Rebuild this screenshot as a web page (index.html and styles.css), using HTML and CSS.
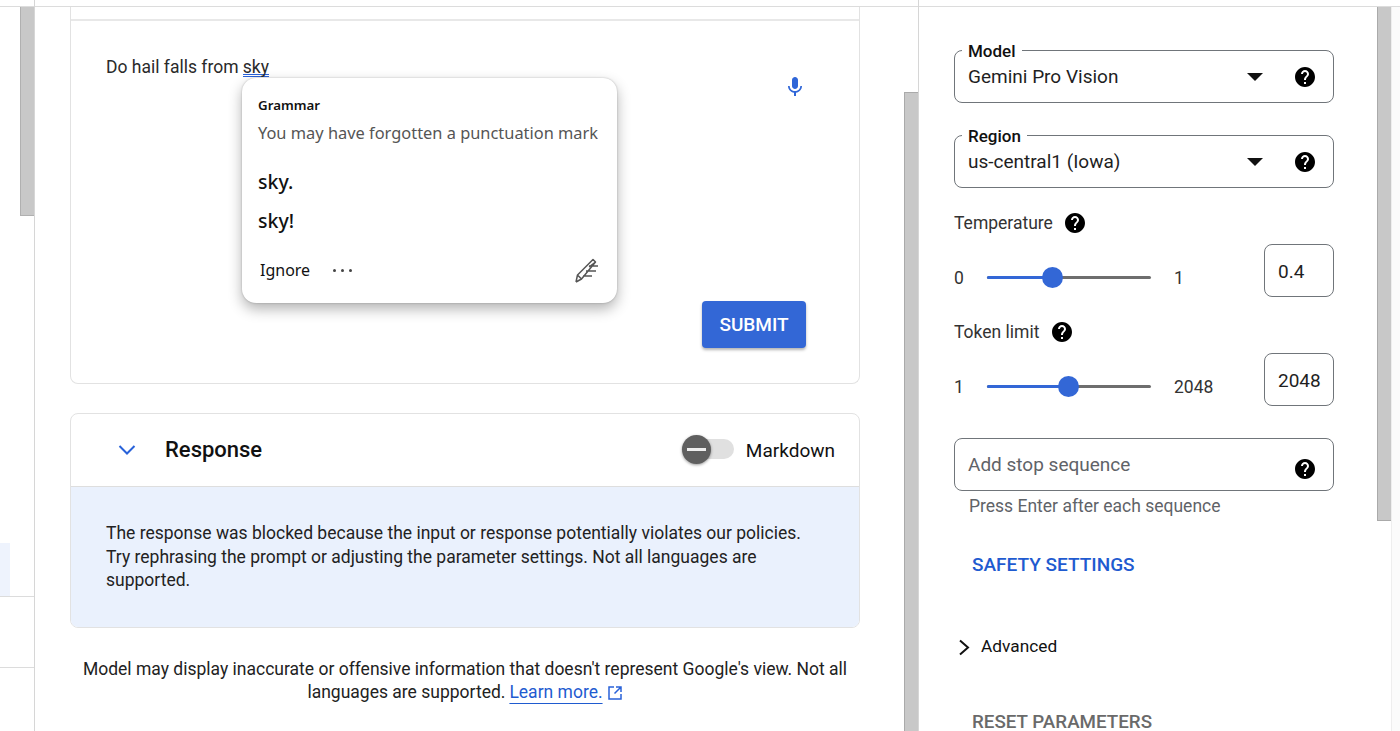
FILE: index.html
```html
<!DOCTYPE html>
<html lang="en">
<head>
<meta charset="utf-8">
<title>Gemini Pro Vision prompt</title>
<link rel="stylesheet" href="styles.css">
</head>
<body>
<svg class="defs" width="0" height="0" aria-hidden="true">
  <symbol id="help" viewBox="0 0 24 24"><path d="M12 2C6.48 2 2 6.48 2 12s4.48 10 10 10 10-4.48 10-10S17.52 2 12 2zm1 17h-2v-2h2v2zm2.07-7.75l-.9.92C13.45 12.9 13 13.5 13 15h-2v-.5c0-1.1.45-2.1 1.17-2.83l1.24-1.26c.37-.36.59-.86.59-1.41 0-1.1-.9-2-2-2s-2 .9-2 2H8c0-2.21 1.79-4 4-4s4 1.79 4 4c0 .88-.36 1.68-.93 2.25z"/></symbol>
</svg>
<div class="shell">
  <aside class="side">
    <div class="strip"></div>
    <div class="side-list">
      <div class="side-row side-row-active"><div class="side-mark"></div></div>
      <div class="side-row side-row-plain"></div>
    </div>
    <div class="side-thumb"></div>
  </aside>

  <main class="main">
    <div class="strip"></div>
    <div class="main-body">
      <div class="main-content">
        <section class="card prompt-card">
          <div class="prompt-head"></div>
          <div class="prompt-body">
            <p class="prompt-text">Do hail falls from <span class="flagged">sky</span></p>
            <svg class="mic" viewBox="0 0 24 24" width="24" height="24"><path d="M12 14c1.66 0 2.99-1.34 2.99-3L15 5c0-1.66-1.34-3-3-3S9 3.34 9 5v6c0 1.66 1.34 3 3 3zm5.3-3c0 3-2.54 5.1-5.3 5.1S6.7 14 6.7 11H5c0 3.41 2.72 6.23 6 6.72V21h2v-3.28c3.28-.48 6-3.3 6-6.72h-1.7z"/></svg>
            <button class="submit">SUBMIT</button>
          </div>
          <div class="popup">
            <div class="popup-title">Grammar</div>
            <div class="popup-msg">You may have forgotten a punctuation mark</div>
            <div class="popup-option popup-option-first">sky.</div>
            <div class="popup-option">sky!</div>
            <div class="popup-foot">
              <span class="popup-ignore">Ignore</span>
              <span class="popup-more"><i></i><i></i><i></i></span>
              <svg class="feather" viewBox="0 0 24 25" width="24" height="25"><path d="M1 24L2.500 17 18 1.500 20.500 4 14 9M14 8H23M11 13H21M8 18H17M2.500 17L6.500 21 1 24M6.500 21L20.500 4"/></svg>
            </div>
          </div>
        </section>

        <section class="card response-card">
          <header class="response-head">
            <svg class="response-chevron" viewBox="0 0 18 10" width="18" height="10"><path d="M1.500 1l7.500 7.500L16.500 1"/></svg>
            <h2 class="response-title">Response</h2>
            <div class="toggle"><span class="toggle-knob"></span></div>
            <span class="toggle-label">Markdown</span>
          </header>
          <div class="response-body">The response was blocked because the input or response potentially violates our policies. Try rephrasing the prompt or adjusting the parameter settings. Not all languages are supported.</div>
        </section>

        <div class="disclaimer">
          <div>Model may display inaccurate or offensive information that doesn't represent Google's view. Not all</div>
          <div class="disclaimer-line"><span>languages are supported.</span><a class="learn" href="#">Learn more.</a><svg class="ext" viewBox="0 0 16 16" width="16" height="16"><path d="M7 2H2v12h12V9M9 2h5v5M14 2L7.500 8.500"/></svg></div>
        </div>
      </div>
      <div class="main-track"><div class="main-thumb"></div></div>
    </div>
  </main>

  <aside class="panel">
    <div class="strip"></div>
    <div class="panel-body">
      <div class="panel-content">
        <div class="field">
          <span class="legend">Model</span>
          <span class="field-value">Gemini Pro Vision</span>
          <span class="caret"></span>
          <svg class="help"><use href="#help"/></svg>
        </div>
        <div class="field field-next">
          <span class="legend">Region</span>
          <span class="field-value">us-central1 (Iowa)</span>
          <span class="caret"></span>
          <svg class="help"><use href="#help"/></svg>
        </div>

        <div class="param-label param-first">Temperature <svg class="help help-inline"><use href="#help"/></svg></div>
        <div class="slider-row">
          <span class="min">0</span>
          <div class="track"><div class="fill" style="width:40%"><span class="knob"></span></div></div>
          <span class="max">1</span>
          <div class="num">0.4</div>
        </div>

        <div class="param-label param-second">Token limit <svg class="help help-inline"><use href="#help"/></svg></div>
        <div class="slider-row">
          <span class="min">1</span>
          <div class="track"><div class="fill" style="width:50%"><span class="knob"></span></div></div>
          <span class="max">2048</span>
          <div class="num">2048</div>
        </div>

        <div class="field field-next">
          <span class="field-value field-placeholder">Add stop sequence</span>
          <svg class="help help-low"><use href="#help"/></svg>
        </div>
        <div class="hint">Press Enter after each sequence</div>

        <div class="text-btn safety">SAFETY SETTINGS</div>
        <div class="advanced">
          <svg class="adv-chevron" viewBox="0 0 12 17" width="12" height="17"><path d="M2 1.500l8 7-8 7"/></svg>
          <span>Advanced</span>
        </div>
        <div class="text-btn reset">RESET PARAMETERS</div>
      </div>
      <div class="panel-track"><div class="panel-thumb"></div></div>
    </div>
  </aside>
</div>
</body>
</html>
```
FILE: styles.css
```css
* { box-sizing: border-box; }
html, body { margin: 0; height: 731px; overflow: hidden; background: #fff; }
body { font-family: Roboto, "Liberation Sans", sans-serif; font-size: 17.500px; color: #1f1f1f; }
.defs { position: absolute; }
.shell { display: flex; height: 731px; }
.strip { height: 7px; border-bottom: 1px solid #dcdcdc; }

/* left rail */
.side { position: relative; width: 35px; flex: none; border-right: 1px solid #d6d6d6; }
.side-list { padding-top: 536px; }
.side-row { border-bottom: 1px solid #dcdcdc; }
.side-row-active { height: 54px; }
.side-mark { width: 10px; height: 53px; background: #eef3fd; }
.side-row-plain { height: 71px; }
.side-thumb { position: absolute; left: 20px; top: 7px; width: 14px; height: 209px; background: #c8c8c8; border: 1px solid #b0b0b0; border-width: 0 0 1px 1px; }

/* centre */
.main { width: 884px; flex: none; border-right: 1px solid #d6d6d6; display: flex; flex-direction: column; }
.main-body { flex: 1; display: flex; min-height: 0; }
.main-content { width: 869px; flex: none; padding: 0 9px 0 35px; }
.main-track { width: 14px; flex: none; padding-top: 85px; }
.main-thumb { height: 650px; background: #c8c8c8; border: 1px solid #aaa; border-width: 1px 0 0 1px; }

.card { width: 790px; border: 1px solid #e2e2e2; border-radius: 0 0 8px 8px; background: #fff; }
.prompt-card { position: relative; height: 377px; border-top: 0; }
.prompt-head { height: 14px; border-bottom: 2px solid #e8e8e8; }
.prompt-body { display: flex; flex-direction: column; height: 362px; padding: 35px 52px 35px 35px; }
.prompt-text { margin: 0; font-size: 17.500px; line-height: 22px; color: #2a2a2a; }
.flagged { display: inline-block; line-height: 14px; border-bottom: 3px double #2962d9; }
.mic { align-self: flex-end; margin: -3px 0 0; fill: #2f66d8; }
.submit { align-self: flex-end; margin-top: auto; margin-right: 1px; width: 104px; height: 47px; border: 0; border-radius: 4px; background: #3367d6; color: #fff; font: 500 19px Roboto, sans-serif; box-shadow: 0 2px 3px rgba(0,0,0,.3); }

.popup { position: absolute; left: 171px; top: 71px; width: 375px; height: 225px; padding: 17px 16px 0; border-radius: 14px; background: #fff; box-shadow: 0 0 2px rgba(0,0,0,.25), 0 6px 14px rgba(0,0,0,.3); font-family: "Noto Sans", sans-serif; color: #111; }
.popup-title { font-size: 13.300px; font-weight: 600; line-height: 20px; }
.popup-msg { margin-top: 7px; font-size: 16.400px; line-height: 22px; color: #555; white-space: nowrap; }
.popup-option { font-size: 19.500px; font-weight: 500; line-height: 24px; margin-top: 15px; }
.popup-option-first { margin-top: 26px; }
.popup-foot { display: flex; align-items: center; margin-top: 24px; height: 26px; }
.popup-ignore { margin-left: 2px; font-size: 16px; line-height: 22px; }
.popup-more { display: flex; gap: 5px; margin-left: 23px; }
.popup-more i { width: 3px; height: 3px; border-radius: 50%; background: #444; }
.feather { margin-left: auto; margin-right: 2px; fill: none; stroke: #555; stroke-width: 1.500; stroke-linejoin: round; }

.response-card { margin-top: 29px; height: 215px; border-top: 1px solid #e2e2e2; border-radius: 8px; overflow: hidden; display: flex; flex-direction: column; }
.response-head { display: flex; align-items: center; height: 73px; flex: none; border-bottom: 1px solid #dedede; padding: 0 24px 0 47px; }
.response-chevron { fill: none; stroke: #2962d9; stroke-width: 2; margin-bottom: 1px; }
.response-title { margin: 0 0 2px 29px; font-size: 22px; font-weight: 500; color: #111; }
.toggle { position: relative; width: 44px; height: 20px; margin: 0 0 2px auto; border-radius: 10px; background: #e0e0e0; }
.toggle-knob { position: absolute; left: -8px; top: -4px; width: 29px; height: 29px; border-radius: 50%; background: #5f5f5f; box-shadow: 0 1px 3px rgba(0,0,0,.4); display: flex; align-items: center; justify-content: center; }
.toggle-knob::before { content: ""; width: 19px; height: 3px; background: #eee; }
.toggle-label { margin-left: 12px; font-size: 19px; color: #111; }
.response-body { flex: 1; padding: 35px 45px 0 35px; background: #eaf1fd; font-size: 17.500px; line-height: 23.500px; color: #222; }

.disclaimer { width: 790px; margin-top: 30px; text-align: center; font-size: 17.500px; line-height: 23px; color: #222; }
.disclaimer-line { display: flex; justify-content: center; align-items: center; gap: 4px; height: 23px; }
.learn { color: #1f5bd0; text-decoration: underline; text-underline-offset: 5px; text-decoration-thickness: 1px; }
.ext { margin-left: 0; fill: none; stroke: #2962d9; stroke-width: 1.500; }

/* right panel */
.panel { flex: 1; min-width: 0; display: flex; flex-direction: column; }
.panel-body { flex: 1; display: flex; min-height: 0; }
.panel-content { width: 458px; flex: none; padding: 43px 43px 0 35px; }
.panel-track { width: 14px; flex: none; }
.panel-thumb { height: 514px; background: #c8c8c8; border: 1px solid #aaa; border-width: 0 0 1px 1px; }
.panel-body::after { content: ""; width: 9px; flex: none; background: #fbfbfb; border-left: 1px solid #eee; }

.field { position: relative; display: flex; align-items: center; width: 380px; height: 53px; padding: 0 16px 0 13px; border: 1px solid #70757a; border-radius: 8px; }
.field-next { margin-top: 32px; }
.legend { position: absolute; left: 7px; top: -10px; padding: 0 6px; background: #fff; font-size: 17px; font-weight: 500; line-height: 20px; color: #111; }
.field-value { font-size: 19px; color: #1f1f1f; }
.field-placeholder { color: #5f6368; margin-top: -1px; }
.caret { margin-left: auto; margin-right: 30px; width: 0; height: 0; border-left: 8px solid transparent; border-right: 8px solid transparent; border-top: 8px solid #111; }
.help { width: 24px; height: 24px; fill: #000; flex: none; }
.field-placeholder + .help { margin-left: auto; }
.help-low { margin-top: 8px; }
.help-inline { margin-left: 6px; vertical-align: -6px; }

.param-label { height: 24px; font-size: 17.500px; line-height: 24px; color: #333; white-space: nowrap; }
.param-first { margin-top: 23px; }
.param-second { margin-top: 23px; }
.slider-row { display: flex; align-items: center; width: 380px; margin-top: 9px; height: 53px; font-size: 17.500px; color: #333; }
.min { width: 33px; flex: none; padding-top: 14px; }
.max { margin-left: 23px; padding-top: 14px; }
.track { position: relative; width: 164px; height: 3px; margin-top: 14px; flex: none; background: #6e6e6e; border-radius: 2px; }
.fill { position: relative; height: 3px; background: #3367d6; border-radius: 2px; }
.knob { position: absolute; right: -10px; top: -9px; width: 21px; height: 21px; border-radius: 50%; background: #3367d6; }
.num { margin-left: auto; width: 70px; height: 53px; padding-left: 13px; border: 1px solid #70757a; border-radius: 8px; font-size: 19px; line-height: 53px; color: #1f1f1f; }
.hint { margin: 5px 0 0 15px; font-size: 17.500px; line-height: 20px; color: #5f6368; }
.text-btn { margin-left: 18px; font-weight: 500; line-height: 24px; }
.safety { margin-top: 37px; font-size: 19px; color: #1f5bd0; }
.advanced { display: flex; align-items: center; gap: 11px; margin: 57px 0 0 4px; height: 24px; font-size: 17.300px; color: #111; }
.adv-chevron { fill: none; stroke: #111; stroke-width: 2; margin-top: 3px; }
.reset { margin-top: 52px; font-size: 18.800px; color: #6a6a6a; }
```
